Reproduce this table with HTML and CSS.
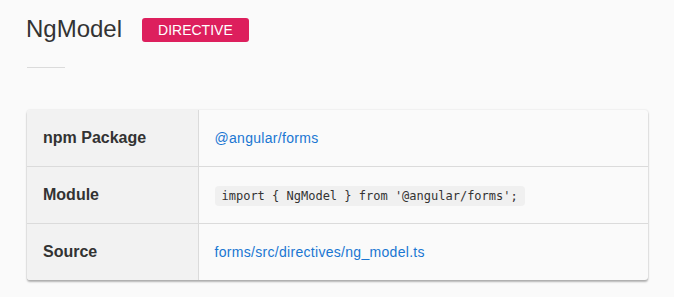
FILE: index.html
```html
<!DOCTYPE html>
<html>
<head>
<meta charset="utf-8">
<link rel="stylesheet" href="styles.css">
</head>
<body>
<div class="page">
  <header class="header">
    <h1 class="title">NgModel</h1>
    <span class="badge">DIRECTIVE</span>
  </header>
  <div class="divider"></div>
  <div class="card">
    <table class="info">
      <tr>
        <th class="label">npm Package</th>
        <td class="value"><a class="link" href="#">@angular/forms</a></td>
      </tr>
      <tr>
        <th class="label">Module</th>
        <td class="value"><code class="code">import { NgModel } from '@angular/forms';</code></td>
      </tr>
      <tr>
        <th class="label">Source</th>
        <td class="value"><a class="link" href="#">forms/src/directives/ng_model.ts</a></td>
      </tr>
    </table>
  </div>
</div>
</body>
</html>
```
FILE: styles.css
```css
html, body {
  margin: 0;
  padding: 0;
  background: #fafafa;
}
body {
  font-family: "Liberation Sans", Arial, sans-serif;
  color: #333;
}
.page {
  padding: 13px 26px 16px 27px;
}
.header {
  display: flex;
  align-items: center;
  height: 32px;
}
.title {
  margin: 0 0 0 -1px;
  font-size: 24px;
  font-weight: normal;
  line-height: 32px;
  color: #333;
}
.badge {
  margin-left: 20px;
  margin-top: 2px;
  background: #dd1f5d;
  color: #fff;
  font-size: 14px;
  line-height: 24px;
  height: 24px;
  padding: 0 16px;
  border-radius: 3px;
}
.divider {
  width: 38px;
  height: 1px;
  background: #dbdbdb;
  margin-top: 22px;
}
.card {
  margin-top: 42px;
  background: #fafafa;
  border-radius: 3px;
  overflow: hidden;
  box-shadow: 0 2px 2px rgba(0,0,0,0.28), 0 0 2px rgba(0,0,0,0.14);
}
.info {
  width: 100%;
  border-collapse: collapse;
}
.info tr + tr th,
.info tr + tr td {
  border-top: 1px solid #dbdbdb;
}
.label {
  width: 171px;
  box-sizing: border-box;
  text-align: left;
  background: #f2f2f2;
  border-right: 1px solid #dbdbdb;
  font-size: 16px;
  font-weight: bold;
  color: #333;
  padding: 0 16px;
  height: 56px;
}
.value {
  padding: 0 16px;
  height: 56px;
  font-size: 14px;
}
.link {
  color: #1976d2;
  text-decoration: none;
  letter-spacing: 0.3px;
}
.code {
  font-family: "DejaVu Sans Mono", monospace;
  font-size: 12px;
  color: #333;
  background: #f0f0f0;
  border-radius: 4px;
  padding: 3px 7px;
}
```
